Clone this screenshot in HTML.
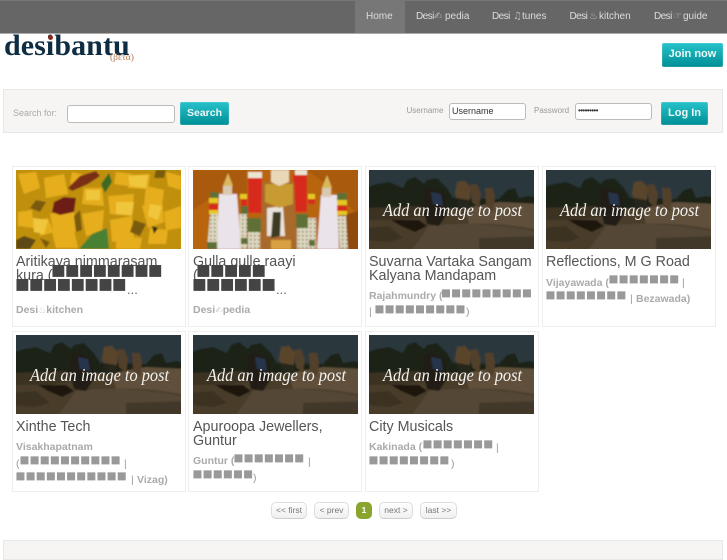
<!DOCTYPE html>
<html><head><meta charset="utf-8">
<style>
html,body{margin:0;padding:0;background:#fff;width:727px;height:545px;overflow:hidden;font-family:"Liberation Sans",sans-serif}
.a{position:absolute}
.nav{top:10px;font-size:10px;color:#ddd;white-space:nowrap;line-height:14px}
.d{font-size:10px;letter-spacing:-.55px}
.ic{font-family:"DejaVu Sans",sans-serif;font-size:10px;color:#bbb}
.btn{background:linear-gradient(#27c2ca,#008e95);box-sizing:border-box;border-radius:2px;color:#eef8f8;font-weight:bold;text-align:center;font-size:10.5px;box-shadow:inset 0 0 0 1px rgba(255,255,255,.12)}
.inp{background:#fff;border:1px solid #bbb;box-sizing:border-box;border-radius:3px;font-size:9px;color:#333;line-height:14px;padding-left:2px}
.lbl{font-size:8px;color:#999;line-height:10px}
.card{background:#fff;border:1px solid #eee;box-sizing:border-box;width:174px;height:161px}
.t{font-size:14.3px;line-height:14px;color:#555;white-space:nowrap}
.dots{font-size:13px;line-height:14px;color:#666;white-space:nowrap}
.s{font-size:10.5px;line-height:16px;font-weight:bold;color:#aaa;white-space:nowrap}
.s2{font-size:10.5px;line-height:16px;color:#999;white-space:nowrap}
.si{font-family:"DejaVu Sans",sans-serif;font-weight:normal;font-size:9px;color:#ccc}
.b1{font-family:"DejaVu Sans",sans-serif;font-size:15.5px;line-height:14px;color:#444;letter-spacing:-.8px;white-space:nowrap}
.b2{font-family:"DejaVu Sans",sans-serif;font-size:10.5px;line-height:12px;color:#999;letter-spacing:.2px;white-space:nowrap}
.pg{top:502px;height:17px;box-sizing:border-box;border:1px solid #ddd;border-bottom-color:#ccc;border-radius:5px;background:linear-gradient(#fff,#f0f0f0);font-size:8.5px;color:#777;text-align:center;line-height:15px}
</style></head><body>
<svg width="0" height="0" style="position:absolute">
<defs>
<filter id="bl" x="-5%" y="-5%" width="110%" height="110%"><feGaussianBlur stdDeviation="0.9"/></filter>
<filter id="bs" x="-5%" y="-5%" width="110%" height="110%"><feGaussianBlur stdDeviation="0.8"/></filter>
<pattern id="sp" width="4" height="4" patternUnits="userSpaceOnUse"><rect width="4" height="4" fill="#ddd6c0"/><rect x="1" y="1" width="1.5" height="1.5" fill="#7d7a40"/></pattern>
<symbol id="bike" viewBox="0 0 165 79">
<g filter="url(#bl)">
<rect x="-5" y="-5" width="175" height="90" fill="#2b373d"/>
<rect x="-5" y="34" width="175" height="50" fill="#483c2b"/>
<path d="M-5 18L8 14L20 12L34 18L38 10L46 7L55 14L58 10L68 8L78 18L84 28L130 29L138 20L146 18L150 28L160 26L170 28V38H-5Z" fill="#1a2419"/>
<path d="M96 38L130 32L170 34V60Q130 52 100 54Z" fill="#5e503b"/>
<path d="M-5 38L50 36L60 46L30 50L-5 50Z" fill="#3a3022"/>
<path d="M60 56Q110 50 170 62V84H40Z" fill="#544734"/>
<path d="M-5 58L20 56L34 68L20 72L-5 70Z" fill="#3b3224"/>
<path d="M110 68L170 66V84H110Z" fill="#42372a"/>
<path d="M22 50L50 50L58 56L46 62L32 56Z" fill="#1c1810"/>
<path d="M55 20L62 18L76 24L78 44L70 56L58 54L54 38Z" fill="#211f18"/>
<path d="M62 22L72 24L74 36L64 34Z" fill="#26344c"/>
<path d="M88 12L96 11L102 18L100 34L92 38L86 24Z" fill="#5a452c"/>
<path d="M101 15L108 14L112 24L110 38L103 32Z" fill="#523f29"/>
<path d="M116 18L124 18L126 28L124 42L117 36Z" fill="#523f29"/>
<path d="M88 28L100 30L102 38L90 40Z" fill="#25251d"/>
</g>
</symbol>
</defs>
</svg>

<!-- nav -->
<div class="a" style="left:0;top:0;width:727px;height:34px;background:#666;border-top:1px solid #777;border-bottom:1px solid #aaa;box-sizing:border-box"></div>
<div class="a" style="left:355px;top:1px;width:50px;height:32px;background:#777"></div>
<div class="a nav" style="left:366px">Home</div>
<div class="a nav d" style="left:416px">Desi</div><div class="a nav ic" style="left:434px">✍</div><div class="a nav" style="left:445px">pedia</div>
<div class="a nav d" style="left:492px">Desi</div><div class="a nav ic" style="left:513px">♫</div><div class="a nav" style="left:522px">tunes</div>
<div class="a nav d" style="left:569.5px">Desi</div><div class="a nav ic" style="left:589px">♨</div><div class="a nav" style="left:599px">kitchen</div>
<div class="a nav d" style="left:654px">Desi</div><div class="a nav ic" style="left:673px">☞</div><div class="a nav" style="left:683px">guide</div>

<!-- logo -->
<div class="a" style="left:4px;top:30px;font-family:'Liberation Serif',serif;font-weight:bold;font-size:30px;line-height:32px;color:#0f2d42;letter-spacing:.08px;white-space:nowrap">desibantu</div>
<div class="a" style="left:48px;top:35px;width:5px;height:5px;border-radius:50%;background:#8a2a1c"></div>
<div class="a" style="left:110px;top:53px;font-family:'Liberation Serif',serif;font-size:9.5px;line-height:10px;color:#b5764f;white-space:nowrap">(βετα)</div>
<div class="a btn" style="left:662px;top:43px;width:61px;height:24px;line-height:23px;font-size:11px">Join now</div>

<!-- search -->
<div class="a" style="left:3px;top:89px;width:720px;height:44px;background:#f6f5f3;border:1px solid #e8e8e8;box-sizing:border-box"></div>
<div class="a lbl" style="left:13px;top:108px;font-size:9px;color:#aaa">Search for:</div>
<div class="a inp" style="left:67px;top:105px;width:108px;height:18px"></div>
<div class="a btn" style="left:180px;top:102px;width:49px;height:23px;line-height:22px">Search</div>
<div class="a lbl" style="left:406.5px;top:106px">Username</div>
<div class="a inp" style="left:449px;top:103px;width:77px;height:17px">Username</div>
<div class="a lbl" style="left:534px;top:106px">Password</div>
<div class="a inp" style="left:575px;top:103px;width:77px;height:17px;font-size:8px;letter-spacing:-.6px">•••••••••</div>
<div class="a btn" style="left:661px;top:102px;width:47px;height:23px;line-height:22px;font-size:11px">Log In</div>

<!-- cards row 1 -->
<div class="a card" style="left:12px;top:166px"></div>
<div class="a card" style="left:188px;top:166px"></div>
<div class="a card" style="left:365px;top:166px"></div>
<div class="a card" style="left:541.5px;top:166px"></div>
<!-- cards row 2 -->
<div class="a card" style="left:12px;top:331px"></div>
<div class="a card" style="left:188px;top:331px"></div>
<div class="a card" style="left:365px;top:331px"></div>

<!-- food image -->
<svg class="a" style="left:16px;top:170px" width="165" height="79" viewBox="0 0 165 79">
<g filter="url(#bs)">
<rect x="-5" y="-5" width="175" height="90" fill="#c0900f"/>
<g fill="#e6ae1c">
<path d="M2 4L20 2L24 18L8 24Z"/><path d="M28 8L48 4L52 24L30 28Z"/><path d="M56 2L72 6L70 14L54 14Z"/>
<path d="M100 2L116 4L112 16L98 14Z"/><path d="M112 5L134 4L132 19L112 18Z"/><path d="M150 2L165 6V20L152 16Z"/>
<path d="M68 18L86 18L88 36L66 34Z"/><path d="M92 26L118 24L116 46L94 44Z"/><path d="M130 16L148 20L146 36L128 36Z"/>
<path d="M2 42L16 40L18 58L2 56Z"/><path d="M22 50L32 48L38 62L24 66Z"/><path d="M34 44L58 40L60 62L38 64Z"/>
<path d="M66 44L88 40L86 62L70 66Z"/><path d="M94 50L116 46L118 68L96 72Z"/><path d="M126 36L146 30L148 52L132 58Z"/>
<path d="M148 42L165 36V58L150 60Z"/><path d="M36 62L58 60L62 78L40 78Z"/><path d="M100 66L126 68L124 79L100 79Z"/><path d="M134 58L152 60L150 74L132 74Z"/>
</g>
<g fill="#f0c63c">
<path d="M100 32L118 32L116 45L100 44Z"/><path d="M112 6L132 5L130 18L114 16Z"/><path d="M17 48L32 50L28 64L18 62Z"/><path d="M70 20L84 20L84 30L70 30Z"/><path d="M134 34L146 36L142 50L132 46Z"/>
</g>
<g fill="#7a5a10">
<path d="M20 30L30 32L24 42L14 38Z"/><path d="M58 46L64 40L66 60L60 62Z"/><path d="M118 50L130 54L124 66L114 62Z"/><path d="M8 66L20 70L14 79H0V70Z" fill="#5d4a12"/><path d="M136 56L142 58L138 64Z" fill="#2f2a12"/><path d="M24 68L34 72L30 78Z"/><path d="M140 0L150 0L148 8L138 8Z"/>
</g>
<path d="M52 18L64 6L80 1L84 6L72 14L56 21Z" fill="#7a2f18"/>
<path d="M38 32L48 27L60 28L58 42L44 45L36 42Z" fill="#6e1f14"/>
<path d="M85 14L93 3L96 12L89 23Z" fill="#3d6a22"/>
<path d="M63 79L76 64L91 58L93 79Z" fill="#4a8030"/>
</g>
</svg>

<!-- deity image -->
<svg class="a" style="left:193px;top:170px" width="165" height="79" viewBox="0 0 165 79">
<g filter="url(#bs)">
<rect x="-5" y="-5" width="175" height="90" fill="#b8650f"/>
<path d="M0 0H54V30L30 20L0 40ZM114 0H170V50L140 20Z" fill="#a95a0c"/>
<path d="M130 50L170 40V84H150Z" fill="#8f4a08"/>
<g fill="#ebe3ea">
<path d="M26 24L44 24L48 79H24Z"/><path d="M128 25L144 25L146 79H124Z"/>
</g>
<g fill="url(#sp)">
<path d="M17 44L25 44L25 79H14Z"/><path d="M46 44L54 44L54 79H47Z"/><path d="M144 46L153 46L155 79H147Z"/><path d="M115 48L123 48L123 79H115Z"/>
</g>
<g fill="#d9b85c"><path d="M35 3L40 16L30 16Z"/><path d="M134 5L139 18L129 18Z"/></g>
<g fill="#d9c9b0"><rect x="30" y="16" width="9" height="9"/><rect x="129" y="18" width="9" height="9"/></g>
<g fill="#d82a1c">
<path d="M55 8H69V43H55Z"/><path d="M100 4H114V42H100Z"/>
<rect x="16" y="34" width="9" height="7"/><rect x="144" y="36" width="10" height="7"/><rect x="48" y="28" width="6" height="8"/><rect x="115" y="28" width="7" height="6"/>
</g>
<g fill="#e6c820"><rect x="16" y="28" width="9" height="5"/><rect x="16" y="40" width="9" height="4"/><rect x="144" y="30" width="10" height="5"/><rect x="144" y="41" width="10" height="4"/><rect x="47" y="24" width="7" height="5"/><rect x="115" y="24" width="7" height="5"/></g>
<g fill="#5f6f35"><rect x="17" y="22" width="9" height="6"/><rect x="144" y="23" width="10" height="7"/><rect x="54" y="48" width="14" height="14"/><rect x="103" y="44" width="12" height="14"/><rect x="48" y="36" width="7" height="8"/><rect x="14" y="72" width="10" height="7"/><rect x="48" y="68" width="8" height="6"/><rect x="114" y="70" width="8" height="6"/></g>
<g fill="#ece6d0"><rect x="55" y="2" width="14" height="6"/><rect x="102" y="0" width="12" height="5"/></g>
<g fill="url(#sp)"><rect x="55" y="62" width="12" height="17"/><rect x="104" y="58" width="12" height="21"/></g>
<path d="M69 12L101 12L104 79H68Z" fill="#a86a2a"/>
<path d="M74 38L90 36L92 66L74 66Z" fill="#e8e2da"/>
<path d="M80 42L88 42L87 66L78 68Z" fill="#3d3a22"/>
<path d="M72 14H100V34L86 38L72 32Z" fill="#c89a30"/>
<path d="M78 0H96V12L86 16L78 12Z" fill="#e8d8b8"/>
<path d="M78 70H98V79H78Z" fill="#d8a040"/>
</g>
</svg>

<!-- placeholder images -->
<svg class="a" style="left:369px;top:170px" width="165" height="79"><use href="#bike" width="165" height="79"/><text x="14" y="46" font-family="Liberation Serif,serif" font-style="italic" font-size="18" fill="#f3f3f0" textLength="139" lengthAdjust="spacingAndGlyphs">Add an image to post</text></svg>
<svg class="a" style="left:546px;top:170px" width="165" height="79"><use href="#bike" width="165" height="79"/><text x="14" y="46" font-family="Liberation Serif,serif" font-style="italic" font-size="18" fill="#f3f3f0" textLength="139" lengthAdjust="spacingAndGlyphs">Add an image to post</text></svg>
<svg class="a" style="left:16px;top:335px" width="165" height="79"><use href="#bike" width="165" height="79"/><text x="14" y="46" font-family="Liberation Serif,serif" font-style="italic" font-size="18" fill="#f3f3f0" textLength="139" lengthAdjust="spacingAndGlyphs">Add an image to post</text></svg>
<svg class="a" style="left:193px;top:335px" width="165" height="79"><use href="#bike" width="165" height="79"/><text x="14" y="46" font-family="Liberation Serif,serif" font-style="italic" font-size="18" fill="#f3f3f0" textLength="139" lengthAdjust="spacingAndGlyphs">Add an image to post</text></svg>
<svg class="a" style="left:369px;top:335px" width="165" height="79"><use href="#bike" width="165" height="79"/><text x="14" y="46" font-family="Liberation Serif,serif" font-style="italic" font-size="18" fill="#f3f3f0" textLength="139" lengthAdjust="spacingAndGlyphs">Add an image to post</text></svg>

<!-- card 1 -->
<div class="a t" style="left:16px;top:255px">Aritikaya nimmarasam</div>
<div class="a t" style="left:16px;top:269px">kura (</div>
<div class="a b1" style="left:51px;top:263px">■■■■■■■■</div>
<div class="a b1" style="left:15px;top:277px">■■■■■■■■</div>
<div class="a dots" style="left:127px;top:283px">...</div>
<div class="a s" style="left:16px;top:302px">Desi<span class="si">♨</span>kitchen</div>
<!-- card 2 -->
<div class="a t" style="left:193px;top:255px">Gulla gulle raayi</div>
<div class="a t" style="left:193px;top:269px">(</div>
<div class="a b1" style="left:196px;top:263px">■■■■■</div>
<div class="a b1" style="left:192px;top:277px">■■■■■■</div>
<div class="a dots" style="left:276px;top:283px">...</div>
<div class="a s" style="left:193px;top:302px">Desi<span class="si">✍</span>pedia</div>
<!-- card 3 -->
<div class="a t" style="left:369px;top:255px">Suvarna Vartaka Sangam</div>
<div class="a t" style="left:369px;top:269px">Kalyana Mandapam</div>
<div class="a s" style="left:369px;top:288px">Rajahmundry (</div>
<div class="a b2" style="left:441px;top:287px">■■■■■■■■■</div>
<div class="a s2" style="left:369px;top:304px">|</div>
<div class="a b2" style="left:374.5px;top:303px">■■■■■■■■■</div>
<div class="a s2" style="left:466px;top:304px">)</div>
<!-- card 4 -->
<div class="a t" style="left:546px;top:255px">Reflections, M G Road</div>
<div class="a s" style="left:546px;top:275px">Vijayawada (</div>
<div class="a b2" style="left:608.5px;top:273px">■■■■■■■</div>
<div class="a s2" style="left:682px;top:275px">|</div>
<div class="a b2" style="left:545.5px;top:289px">■■■■■■■■</div>
<div class="a s2" style="left:630px;top:291px">|</div>
<div class="a s" style="left:636px;top:291px">Bezawada)</div>
<!-- card 5 -->
<div class="a t" style="left:16px;top:420px">Xinthe Tech</div>
<div class="a s" style="left:16px;top:439px">Visakhapatnam</div>
<div class="a s2" style="left:16px;top:456px">(</div>
<div class="a b2" style="left:19.5px;top:454px">■■■■■■■■■■</div>
<div class="a s2" style="left:124px;top:456px">|</div>
<div class="a b2" style="left:15.5px;top:470px">■■■■■■■■■■■</div>
<div class="a s2" style="left:131px;top:472px">|</div>
<div class="a s" style="left:137px;top:472px">Vizag)</div>
<!-- card 6 -->
<div class="a t" style="left:193px;top:420px">Apuroopa Jewellers,</div>
<div class="a t" style="left:193px;top:434px">Guntur</div>
<div class="a s" style="left:193px;top:453px">Guntur (</div>
<div class="a b2" style="left:233.5px;top:452px">■■■■■■■</div>
<div class="a s2" style="left:308px;top:454px">|</div>
<div class="a b2" style="left:192.5px;top:468px">■■■■■■</div>
<div class="a s2" style="left:253px;top:470px">)</div>
<!-- card 7 -->
<div class="a t" style="left:369px;top:420px">City Musicals</div>
<div class="a s" style="left:369px;top:439px">Kakinada (</div>
<div class="a b2" style="left:422.5px;top:438px">■■■■■■■</div>
<div class="a s2" style="left:496px;top:440px">|</div>
<div class="a b2" style="left:368.5px;top:454px">■■■■■■■■</div>
<div class="a s2" style="left:451px;top:456px">)</div>

<!-- pagination -->
<div class="a pg" style="left:271px;width:36px">&lt;&lt; first</div>
<div class="a pg" style="left:314px;width:35px">&lt; prev</div>
<div class="a pg" style="left:356px;width:16px;background:#8aa52e;border-color:#8aa52e;color:#fff;font-weight:bold">1</div>
<div class="a pg" style="left:379px;width:34px">next &gt;</div>
<div class="a pg" style="left:420px;width:37px">last &gt;&gt;</div>

<!-- footer -->
<div class="a" style="left:3px;top:540px;width:720px;height:20px;background:#f6f5f3;border:1px solid #e8e8e8;box-sizing:border-box"></div>
</body></html>
